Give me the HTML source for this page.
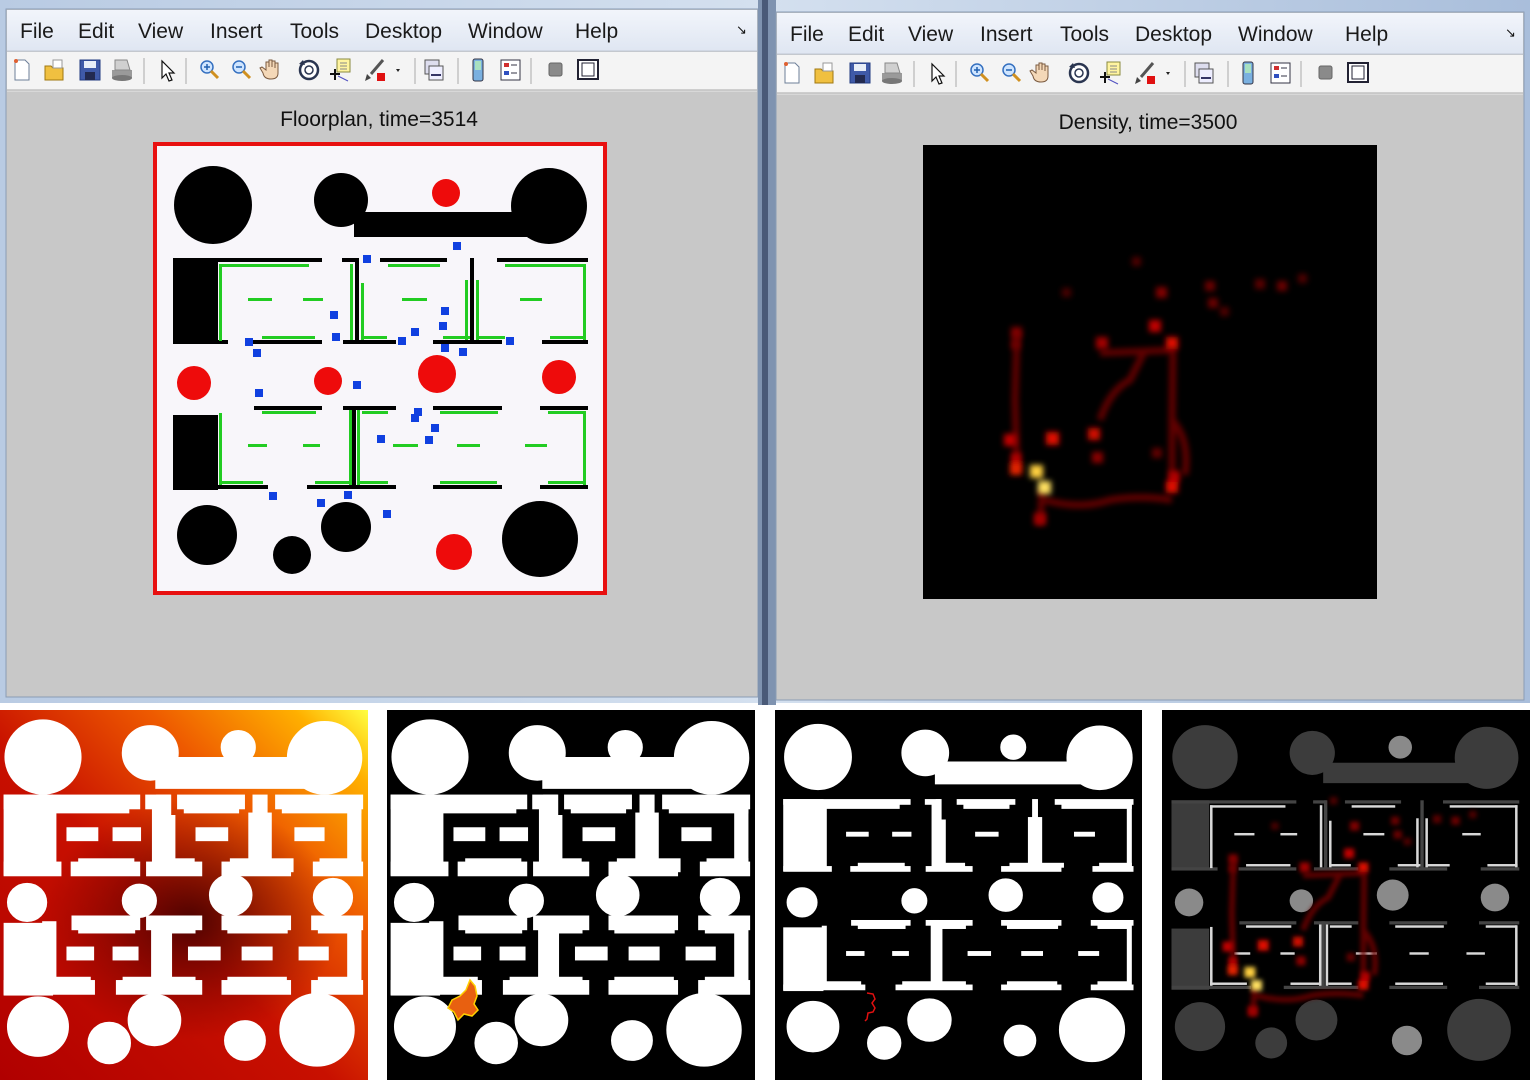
<!DOCTYPE html>
<html><head><meta charset="utf-8"><style>
html,body{margin:0;padding:0;background:#fff;width:1530px;height:1080px;overflow:hidden}
svg{display:block}
text{font-family:"Liberation Sans",sans-serif}
</style></head><body>
<svg width="1530" height="1080" viewBox="0 0 1530 1080" xmlns="http://www.w3.org/2000/svg">
<defs>
<linearGradient id="sky" x1="0" y1="0" x2="1" y2="0"><stop offset="0" stop-color="#b9cbe3"/><stop offset="0.5" stop-color="#d4e0ef"/><stop offset="1" stop-color="#a9bedb"/></linearGradient>
<linearGradient id="menu" x1="0" y1="0" x2="0" y2="1"><stop offset="0" stop-color="#f2f5fb"/><stop offset="1" stop-color="#dfe6f2"/></linearGradient>
<linearGradient id="heat" x1="0" y1="1" x2="1" y2="0"><stop offset="0" stop-color="#b00000"/><stop offset="0.45" stop-color="#c81000"/><stop offset="0.7" stop-color="#ee5a00"/><stop offset="0.9" stop-color="#ffb000"/><stop offset="1" stop-color="#ffff40"/></linearGradient>
<radialGradient id="darkspot" cx="0.5" cy="0.5" r="0.5"><stop offset="0" stop-color="#400000" stop-opacity="0.9"/><stop offset="1" stop-color="#600000" stop-opacity="0"/></radialGradient>
<filter id="blur" x="-50%" y="-50%" width="200%" height="200%"><feGaussianBlur stdDeviation="3"/></filter>
<filter id="blur2" x="-50%" y="-50%" width="200%" height="200%"><feGaussianBlur stdDeviation="5"/></filter>

<g id="circB">
<circle cx="213" cy="205" r="39"/><circle cx="341" cy="200" r="27"/><circle cx="549" cy="206" r="38"/>
<circle cx="207" cy="535" r="30"/><circle cx="292" cy="555" r="19"/><circle cx="346" cy="527" r="25"/><circle cx="540" cy="539" r="38"/>
<rect x="354" y="212" width="174" height="25"/>
<rect x="173" y="258" width="45" height="85"/><rect x="173" y="415" width="45" height="75"/>
</g>
<g id="circR">
<circle cx="446" cy="193" r="14"/><circle cx="194" cy="383" r="17"/><circle cx="328" cy="381" r="14"/>
<circle cx="437" cy="374" r="19"/><circle cx="559" cy="377" r="17"/><circle cx="454" cy="552" r="18"/>
</g>
<g id="wallB">
<rect x="173" y="258" width="149" height="4"/><rect x="342" y="258" width="16" height="4"/><rect x="380" y="258" width="67" height="4"/><rect x="497" y="258" width="91" height="4"/>
<rect x="355" y="258" width="4" height="85"/><rect x="470" y="258" width="4" height="85"/>
<rect x="173" y="340" width="55" height="4"/><rect x="253" y="340" width="69" height="4"/><rect x="343" y="340" width="53" height="4"/><rect x="433" y="340" width="69" height="4"/><rect x="542" y="340" width="46" height="4"/>
<rect x="254" y="406" width="68" height="4"/><rect x="343" y="406" width="53" height="4"/><rect x="433" y="406" width="69" height="4"/><rect x="540" y="406" width="48" height="4"/>
<rect x="352" y="406" width="4" height="82"/>
<rect x="173" y="485" width="95" height="4"/><rect x="307" y="485" width="89" height="4"/><rect x="433" y="485" width="69" height="4"/><rect x="540" y="485" width="48" height="4"/>
</g>
<g id="wallG">
<rect x="219" y="264" width="3" height="77"/><rect x="219" y="264" width="90" height="3"/><rect x="262" y="336" width="53" height="3"/>
<rect x="248" y="298" width="24" height="3"/><rect x="303" y="298" width="20" height="3"/><rect x="402" y="298" width="25" height="3"/><rect x="520" y="298" width="22" height="3"/>
<rect x="350" y="264" width="3" height="76"/><rect x="361" y="283" width="3" height="57"/><rect x="361" y="336" width="26" height="3"/><rect x="388" y="264" width="52" height="3"/>
<rect x="465" y="280" width="3" height="60"/><rect x="476" y="280" width="3" height="60"/><rect x="443" y="336" width="27" height="3"/><rect x="477" y="336" width="28" height="3"/>
<rect x="505" y="264" width="81" height="3"/><rect x="583" y="264" width="3" height="76"/><rect x="550" y="336" width="36" height="3"/>
<rect x="219" y="413" width="3" height="72"/><rect x="219" y="481" width="44" height="3"/><rect x="262" y="411" width="54" height="3"/>
<rect x="248" y="444" width="19" height="3"/><rect x="303" y="444" width="17" height="3"/><rect x="393" y="444" width="25" height="3"/><rect x="457" y="444" width="23" height="3"/><rect x="525" y="444" width="22" height="3"/>
<rect x="349" y="410" width="3" height="75"/><rect x="357" y="410" width="3" height="75"/><rect x="362" y="411" width="26" height="3"/>
<rect x="315" y="481" width="35" height="3"/><rect x="360" y="481" width="28" height="3"/>
<rect x="440" y="411" width="58" height="3"/><rect x="440" y="481" width="57" height="3"/>
<rect x="548" y="411" width="37" height="3"/><rect x="583" y="411" width="3" height="74"/><rect x="548" y="481" width="37" height="3"/>
</g>
<g id="obs"><use href="#circB"/><use href="#circR"/><use href="#wallB"/><use href="#wallG"/></g>

<g id="dens">
<g stroke="#6a0000" stroke-width="7" fill="none" filter="url(#blur)" opacity="0.9">
<path d="M1017 333 L1015 400 L1017 470"/>
<path d="M1100 353 L1173 350 L1172 420 L1172 488"/>
<path d="M1045 500 Q1080 510 1110 500 Q1140 495 1172 500"/>
<path d="M1042 490 L1040 525"/>
<path d="M1100 420 Q1110 390 1130 380 L1145 350"/>
<path d="M1172 420 Q1190 440 1185 475"/>
</g>
<g filter="url(#blur)">
<rect x="1038" y="481" width="13" height="13" fill="#ffe060"/>
<rect x="1030" y="465" width="13" height="13" fill="#ffd040"/>
<rect x="1010" y="463" width="12" height="12" fill="#e02000"/>
<rect x="1011" y="453" width="10" height="10" fill="#b00000"/>
<rect x="1004" y="434" width="12" height="12" fill="#c00000"/>
<rect x="1046" y="432" width="13" height="13" fill="#e01000"/>
<rect x="1088" y="428" width="12" height="12" fill="#d01000"/>
<rect x="1092" y="452" width="11" height="11" fill="#8a0000"/>
<rect x="1166" y="481" width="12" height="12" fill="#e01000"/>
<rect x="1169" y="471" width="11" height="11" fill="#b00000"/>
<rect x="1166" y="337" width="12" height="12" fill="#e01000"/>
<rect x="1149" y="320" width="12" height="12" fill="#c00000"/>
<rect x="1096" y="337" width="12" height="12" fill="#a00000"/>
<rect x="1011" y="327" width="11" height="11" fill="#800000"/>
<rect x="1011" y="340" width="9" height="9" fill="#700000"/>
<rect x="1156" y="287" width="11" height="11" fill="#800000"/>
<rect x="1205" y="281" width="10" height="10" fill="#6a0000"/>
<rect x="1208" y="298" width="10" height="10" fill="#6a0000"/>
<rect x="1277" y="281" width="10" height="10" fill="#6a0000"/>
<rect x="1255" y="279" width="10" height="10" fill="#5a0000"/>
<rect x="1298" y="274" width="9" height="9" fill="#500000"/>
<rect x="1132" y="257" width="9" height="9" fill="#500000"/>
<rect x="1062" y="288" width="9" height="9" fill="#4a0000"/>
<rect x="1220" y="307" width="9" height="9" fill="#500000"/>
<rect x="1034" y="513" width="12" height="12" fill="#a00000"/>
<rect x="1152" y="448" width="10" height="10" fill="#600000"/>
</g>
</g>

<g id="tb">
<!-- new -->
<path d="M15 60h10l4 4v16h-14z" fill="#fff" stroke="#6e7f99"/><circle cx="16" cy="61" r="2" fill="#e06030"/>
<!-- open -->
<path d="M45 66h6l2 2h10v12h-18z" fill="#f0c040" stroke="#a07810"/><path d="M53 60h9v8h-9z" fill="#fff" stroke="#999"/>
<!-- save -->
<rect x="80" y="60" width="20" height="20" fill="#3f5aa8" stroke="#213a80"/><rect x="84" y="61" width="12" height="7" fill="#e8eef8"/><rect x="85" y="72" width="10" height="8" fill="#222a50"/>
<!-- print -->
<path d="M112 70h20v8h-20z" fill="#9a9a9a"/><path d="M115 60h12l3 10h-15z" fill="#d0d0d0" stroke="#888"/><ellipse cx="122" cy="78" rx="10" ry="3" fill="#777"/>
<line x1="144" y1="58" x2="144" y2="84" stroke="#aaa"/>
<!-- arrow -->
<path d="M162 61v17l4-4 3 7 3-1-3-7h5z" fill="#fff" stroke="#111" stroke-width="1.2"/>
<line x1="186" y1="58" x2="186" y2="84" stroke="#aaa"/>
<!-- zoom in -->
<circle cx="207" cy="67" r="6" fill="#cfe5ff" stroke="#3570c0" stroke-width="1.5"/><path d="M211 71l7 7" stroke="#d09020" stroke-width="3"/><path d="M204 67h6M207 64v6" stroke="#2060b0" stroke-width="1.5"/>
<circle cx="239" cy="67" r="6" fill="#cfe5ff" stroke="#3570c0" stroke-width="1.5"/><path d="M243 71l7 7" stroke="#d09020" stroke-width="3"/><path d="M236 67h6" stroke="#2060b0" stroke-width="1.5"/>
<!-- hand -->
<path d="M266 68v-6h3v5v-7h3v7v-6h3v7v-5h3v10q0 6-7 6t-8-6l-3-5 2-1 4 3z" fill="#f4d8b8" stroke="#7a5a40"/>
<!-- rotate -->
<circle cx="309" cy="70" r="9" fill="#fff" stroke="#2a3550" stroke-width="2.5"/><circle cx="309" cy="70" r="4" fill="none" stroke="#2a3550" stroke-width="1.5"/><path d="M299 64l4-4 2 5z" fill="#2a3550"/>
<!-- datacursor -->
<rect x="337" y="59" width="13" height="13" fill="#fff4a0" stroke="#8a8a40"/><path d="M340 63h7M340 66h7M340 69h7" stroke="#888"/><path d="M330 74h10M335 69v11" stroke="#111" stroke-width="2"/><path d="M338 76l10 5" stroke="#5050c0"/>
<!-- brush -->
<path d="M383 60l-12 14" stroke="#555" stroke-width="3"/><path d="M367 74l4 4-6 3z" fill="#444"/><rect x="377" y="73" width="8" height="8" fill="#e01010"/>
<path d="M396 69l4 0-2 3z" fill="#222"/>
<line x1="415" y1="58" x2="415" y2="84" stroke="#aaa"/>
<!-- link -->
<rect x="425" y="60" width="14" height="14" fill="#dde" stroke="#555"/><rect x="429" y="66" width="14" height="14" fill="#eef" stroke="#555"/><path d="M431 75h10" stroke="#336" stroke-width="2"/>
<line x1="458" y1="58" x2="458" y2="84" stroke="#aaa"/>
<!-- colorbar -->
<rect x="473" y="59" width="10" height="22" rx="2" fill="#7ab0e0" stroke="#334"/><rect x="475" y="61" width="6" height="9" fill="#a8e0c0"/>
<!-- legend -->
<rect x="501" y="60" width="19" height="20" fill="#fff" stroke="#334"/><rect x="504" y="63" width="5" height="4" fill="#d03030"/><rect x="504" y="71" width="5" height="4" fill="#3050c0"/><path d="M511 65h6M511 73h6" stroke="#334"/>
<line x1="531" y1="58" x2="531" y2="84" stroke="#aaa"/>
<rect x="549" y="63" width="13" height="13" rx="2" fill="#8a8a8a" stroke="#666"/>
<rect x="578" y="60" width="20" height="19" fill="#fff" stroke="#223" stroke-width="2"/><rect x="582" y="63" width="12" height="13" fill="none" stroke="#223"/>
</g>
</defs>

<!-- desktop background -->
<rect x="0" y="0" width="1530" height="705" fill="url(#sky)"/>
<rect x="0" y="703" width="1530" height="377" fill="#fff"/>

<!-- LEFT WINDOW -->
<rect x="6" y="9" width="752" height="688" fill="#c8c8c8" stroke="#8a9cb5"/>
<rect x="7" y="10" width="750" height="41" fill="url(#menu)"/>
<line x1="7" y1="51" x2="757" y2="51" stroke="#c0c8d4"/>
<rect x="7" y="52" width="750" height="38" fill="#f4f4f4"/>
<line x1="7" y1="90" x2="757" y2="90" stroke="#a8a8a8"/>
<line x1="7" y1="91" x2="757" y2="91" stroke="#e8e8e8"/>
<g font-size="21" fill="#1a1a1a">
<text x="20" y="38">File</text><text x="78" y="38">Edit</text><text x="138" y="38">View</text><text x="210" y="38">Insert</text><text x="290" y="38">Tools</text><text x="365" y="38">Desktop</text><text x="468" y="38">Window</text><text x="575" y="38">Help</text>
</g>
<text x="736" y="34" font-size="13" fill="#111">&#8600;</text>
<use href="#tb"/>
<text x="379" y="126" font-size="21" text-anchor="middle" fill="#111">Floorplan, time=3514</text>
<rect x="155" y="144" width="450" height="449" fill="#f8f6fa" stroke="#e81010" stroke-width="4"/>
<use href="#circB" fill="#000"/>
<use href="#wallB" fill="#000"/>
<use href="#wallG" fill="#22cc22"/>
<use href="#circR" fill="#ee0b0b"/>
<g fill="#1040e0">
<rect x="453" y="242" width="8" height="8"/><rect x="363" y="255" width="8" height="8"/><rect x="330" y="311" width="8" height="8"/><rect x="332" y="333" width="8" height="8"/><rect x="245" y="338" width="8" height="8"/><rect x="253" y="349" width="8" height="8"/><rect x="398" y="337" width="8" height="8"/><rect x="411" y="328" width="8" height="8"/><rect x="441" y="307" width="8" height="8"/><rect x="439" y="322" width="8" height="8"/><rect x="441" y="344" width="8" height="8"/><rect x="459" y="348" width="8" height="8"/><rect x="506" y="337" width="8" height="8"/><rect x="353" y="381" width="8" height="8"/><rect x="255" y="389" width="8" height="8"/><rect x="414" y="408" width="8" height="8"/><rect x="411" y="414" width="8" height="8"/><rect x="431" y="424" width="8" height="8"/><rect x="425" y="436" width="8" height="8"/><rect x="377" y="435" width="8" height="8"/><rect x="269" y="492" width="8" height="8"/><rect x="317" y="499" width="8" height="8"/><rect x="344" y="491" width="8" height="8"/><rect x="383" y="510" width="8" height="8"/>
</g>

<!-- divider -->
<rect x="758" y="0" width="18" height="705" fill="#7f93b0"/>
<rect x="762" y="0" width="6" height="705" fill="#4a5a78"/>

<!-- RIGHT WINDOW -->
<rect x="776" y="12" width="748" height="688" fill="#c8c8c8" stroke="#8a9cb5"/>
<rect x="777" y="13" width="746" height="41" fill="url(#menu)"/>
<line x1="777" y1="54" x2="1523" y2="54" stroke="#c0c8d4"/>
<rect x="777" y="55" width="746" height="38" fill="#f4f4f4"/>
<line x1="777" y1="93" x2="1523" y2="93" stroke="#a8a8a8"/>
<line x1="777" y1="94" x2="1523" y2="94" stroke="#e8e8e8"/>
<g font-size="21" fill="#1a1a1a">
<text x="790" y="41">File</text><text x="848" y="41">Edit</text><text x="908" y="41">View</text><text x="980" y="41">Insert</text><text x="1060" y="41">Tools</text><text x="1135" y="41">Desktop</text><text x="1238" y="41">Window</text><text x="1345" y="41">Help</text>
</g>
<text x="1505" y="37" font-size="13" fill="#111">&#8600;</text>
<use href="#tb" transform="translate(770,3)"/>
<text x="1148" y="129" font-size="21" text-anchor="middle" fill="#111">Density, time=3500</text>
<rect x="923" y="145" width="454" height="454" fill="#000"/>
<use href="#dens"/>

<!-- BOTTOM PANELS -->
<!-- panel 1 -->
<rect x="0" y="710" width="368" height="370" fill="url(#heat)"/>
<ellipse cx="190" cy="920" rx="150" ry="120" fill="url(#darkspot)"/>
<g transform="translate(43,757) scale(0.838,0.817) translate(-213,-205)">
<use href="#obs" fill="#fff" stroke="#fff" stroke-width="14" stroke-linejoin="miter"/>
</g>
<!-- panel 2 -->
<rect x="387" y="710" width="368" height="370" fill="#000"/>
<g transform="translate(430,757) scale(0.838,0.817) translate(-213,-205)">
<use href="#obs" fill="#fff" stroke="#fff" stroke-width="14"/>
</g>
<path d="M452 1000 l8 -4 6 -6 4 -10 5 6 2 10 -3 8 4 6 -6 6 -8 -2 -6 6 -4 -8 -6 -4z" fill="#e86010" stroke="#ffd000" stroke-width="1.5"/>
<!-- panel 3 -->
<rect x="775" y="710" width="367" height="370" fill="#000"/>
<g transform="translate(818,757) scale(0.838,0.817) translate(-213,-205)">
<use href="#obs" fill="#fff" stroke="#fff" stroke-width="3"/>
</g>
<path d="M867 993 l6 1 2 5 -3 4 3 5 -2 4 -5 1 -1 6 -2 2" fill="none" stroke="#e01010" stroke-width="1.5"/>
<!-- panel 4 -->
<rect x="1162" y="710" width="368" height="370" fill="#000"/>
<g transform="translate(1205,757) scale(0.838,0.817) translate(-213,-205)">
<use href="#circB" fill="#3c3c3c"/>
<use href="#circR" fill="#8a8a8a"/>
<use href="#wallB" fill="#444"/>
<use href="#wallG" fill="#d8d8d8"/>
<use href="#dens" transform="translate(-770,-3)"/>
</g>
</svg>
</body></html>
